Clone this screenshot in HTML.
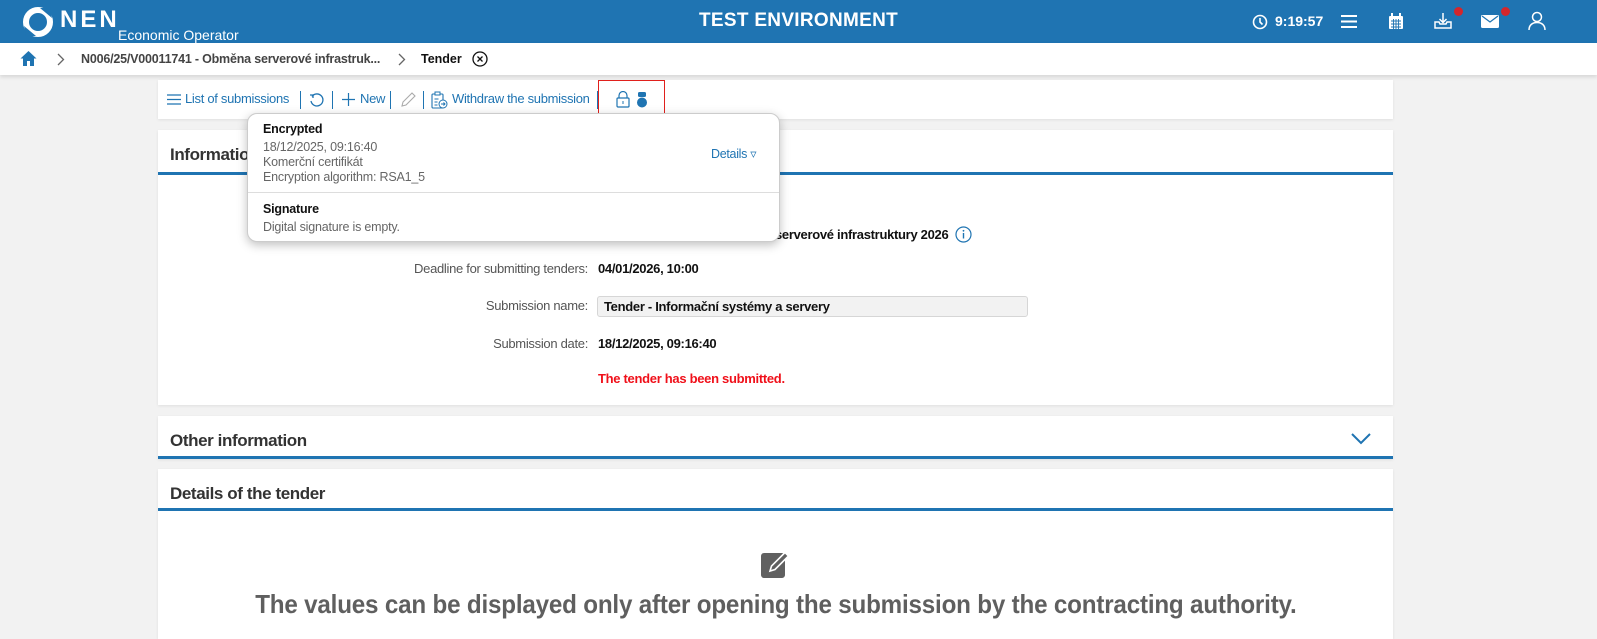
<!DOCTYPE html>
<html><head><meta charset="utf-8">
<style>
*{box-sizing:border-box;margin:0;padding:0}
body{width:1597px;height:632px;overflow:hidden;background:#f2f2f2;font-family:"Liberation Sans",Arial,sans-serif;position:relative;color:#222}
.abs{position:absolute}
.hdr{left:0;top:0;width:1597px;height:43px;background:#1f74b2;color:#fff}
.bc{left:0;top:43px;width:1597px;height:32px;background:#fff;box-shadow:0 2px 4px rgba(0,0,0,.12)}
.panel{background:#fff;left:158px;width:1235px;box-shadow:0 1px 3px rgba(0,0,0,.08)}
.lnk{color:#1f74b2;font-size:13px;letter-spacing:-.3px}
.sep{width:1px;height:18px;background:#1f74b2}
.h2{font-size:17px;font-weight:bold;color:#333;letter-spacing:-.4px}
.bar{height:3px;background:#1f74b2;left:0;width:1235px}
.lbl{font-size:13px;color:#555;letter-spacing:-.3px;text-align:right;width:300px}
.val{font-size:13px;color:#111;font-weight:bold;letter-spacing:-.3px}
.pop{left:247px;top:113px;width:533px;height:129px;background:#fff;border:1px solid #ccc;border-radius:10px;box-shadow:0 3px 10px rgba(0,0,0,.25)}
.pop .t{font-size:12.5px;color:#111;letter-spacing:-.2px}
.pop .g{font-size:12.5px;color:#666;letter-spacing:-.2px;line-height:15px}
</style></head><body>
<div class="abs hdr">
  <svg class="abs" style="left:22px;top:6px" width="32" height="32" viewBox="0 0 32 32"><circle cx="16" cy="16" r="12" fill="none" stroke="#fff" stroke-width="6"/><path d="M2 20 L14 30 L4 30Z M30 12 L18 2 L28 2Z" fill="#1f74b2"/></svg>
  <div class="abs" style="left:60px;top:6px;font-size:24px;font-weight:bold;letter-spacing:3px">NEN</div>
  <div class="abs" style="left:118px;top:27px;font-size:14px">Economic Operator</div>
  <div class="abs" style="left:0;width:1597px;top:10px;text-align:center;font-size:19px;font-weight:bold;letter-spacing:.3px">TEST ENVIRONMENT</div>
  <svg class="abs" style="left:1252px;top:14px" width="16" height="16" viewBox="0 0 16 16"><circle cx="8" cy="8" r="6.5" fill="none" stroke="#fff" stroke-width="1.6"/><path d="M8 4v4l2.5 2.5" stroke="#fff" stroke-width="1.6" fill="none"/></svg>
  <div class="abs" style="left:1275px;top:13px;font-size:14px;font-weight:bold">9:19:57</div>
  <svg class="abs" style="left:1341px;top:14px" width="16" height="15"><path d="M0 2h16M0 7.5h16M0 13h16" stroke="#fff" stroke-width="2"/></svg>
  <svg class="abs" style="left:1388px;top:13px" width="16" height="17" viewBox="0 0 16 17"><rect x="1" y="3" width="14" height="13" rx="1" fill="#fff"/><path d="M4 0v4M12 0v4" stroke="#fff" stroke-width="2"/><path d="M3 8h10M3 11h10M3 14h10M5.5 6v10M8 6v10M10.5 6v10" stroke="#1f74b2" stroke-width=".9"/></svg>
  <svg class="abs" style="left:1434px;top:12px" width="18" height="18" viewBox="0 0 18 18"><path d="M9 1v9M5.5 7L9 10.5 12.5 7" stroke="#fff" stroke-width="1.5" fill="none"/><path d="M1 10v6h16v-6h-4l-1 2H6l-1-2z" fill="none" stroke="#fff" stroke-width="1.5"/></svg>
  <div class="abs" style="left:1454px;top:7px;width:9px;height:9px;border-radius:50%;background:#d3262c"></div>
  <svg class="abs" style="left:1481px;top:15px" width="18" height="13"><rect width="18" height="13" rx="1.5" fill="#fff"/><path d="M1 1l8 6 8-6" stroke="#1f74b2" stroke-width="1.2" fill="none"/></svg>
  <div class="abs" style="left:1501px;top:7px;width:9px;height:9px;border-radius:50%;background:#d3262c"></div>
  <svg class="abs" style="left:1528px;top:11px" width="18" height="20" viewBox="0 0 18 20"><circle cx="9" cy="6" r="4.5" fill="none" stroke="#fff" stroke-width="1.5"/><path d="M1 19c0-5 3.5-7.5 8-7.5s8 2.5 8 7.5" fill="none" stroke="#fff" stroke-width="1.5"/></svg>
</div>
<div class="abs bc">
  <svg class="abs" style="left:20px;top:7px" width="17" height="17" viewBox="0 0 17 17"><path d="M8.5 1L0.5 8.5h2.5V16h4v-5h3v5h4V8.5h2.5z" fill="#1f74b2"/></svg>
  <svg class="abs" style="left:57px;top:10px" width="8" height="13"><path d="M1 1l5.5 5.5L1 12" fill="none" stroke="#666" stroke-width="1.3"/></svg>
  <div class="abs" style="left:81px;top:9px;font-size:12.5px;font-weight:bold;color:#444;letter-spacing:-.2px">N006/25/V00011741 - Obměna serverové infrastruk...</div>
  <svg class="abs" style="left:398px;top:10px" width="8" height="13"><path d="M1 1l5.5 5.5L1 12" fill="none" stroke="#666" stroke-width="1.3"/></svg>
  <div class="abs" style="left:421px;top:9px;font-size:12.5px;font-weight:bold;color:#111">Tender</div>
  <svg class="abs" style="left:472px;top:8px" width="16" height="16"><circle cx="8" cy="8" r="7" fill="none" stroke="#111" stroke-width="1.3"/><path d="M5.5 5.5l5 5M10.5 5.5l-5 5" stroke="#111" stroke-width="1.3"/></svg>
</div>

<div class="abs panel" style="top:80px;height:39px">
  <svg class="abs" style="left:9px;top:14px" width="14" height="11"><path d="M0 1h14M0 5.5h14M0 10h14" stroke="#1f74b2" stroke-width="1.2"/></svg>
  <div class="abs lnk" style="left:27px;top:11px">List of submissions</div>
  <div class="abs sep" style="left:142px;top:11px"></div>
  <svg class="abs" style="left:151px;top:12px" width="16" height="16" viewBox="0 0 16 16"><path d="M3 4.5A6 6 0 1 1 2 9" fill="none" stroke="#1f74b2" stroke-width="1.3"/><path d="M1 3h3v3" fill="none" stroke="#1f74b2" stroke-width="1.3"/></svg>
  <div class="abs sep" style="left:174px;top:11px"></div>
  <svg class="abs" style="left:184px;top:13px" width="13" height="13"><path d="M6.5 0v13M0 6.5h13" stroke="#1f74b2" stroke-width="1.2"/></svg>
  <div class="abs lnk" style="left:202px;top:11px">New</div>
  <div class="abs sep" style="left:232px;top:11px"></div>
  <svg class="abs" style="left:241px;top:11px" width="18" height="18"><path d="M3 15l1-4 9-9 3 3-9 9z" fill="none" stroke="#aaa" stroke-width="1.1"/></svg>
  <div class="abs sep" style="left:265px;top:11px"></div>
  <svg class="abs" style="left:273px;top:11px" width="17" height="18" viewBox="0 0 17 18"><rect x="1" y="3" width="11" height="14" rx="1" fill="none" stroke="#1f74b2" stroke-width="1.1"/><rect x="4" y="1" width="5" height="3" fill="#fff" stroke="#1f74b2"/><path d="M3.5 8h4M3.5 11h3M3.5 14h3" stroke="#1f74b2"/><circle cx="12" cy="13" r="4" fill="#fff" stroke="#1f74b2"/><path d="M10 13h4M12.5 11.5l1.5 1.5-1.5 1.5" stroke="#1f74b2" fill="none"/></svg>
  <div class="abs lnk" style="left:294px;top:11px">Withdraw the submission</div>
  <div class="abs sep" style="left:439px;top:11px"></div>
  <div class="abs" style="left:440px;top:0;width:67px;height:34px;border:1px solid #e0201c"></div>
  <svg class="abs" style="left:458px;top:11px" width="14" height="17" viewBox="0 0 14 17"><path d="M3 7V4.5a4 4 0 0 1 8 0V7" fill="none" stroke="#1f74b2" stroke-width="1.2"/><rect x="1" y="7" width="12" height="9" rx="1" fill="none" stroke="#1f74b2" stroke-width="1.2"/><path d="M7 10v3" stroke="#1f74b2"/></svg>
  <svg class="abs" style="left:478px;top:12px" width="12" height="16"><rect x="2" y="0" width="8" height="5" rx="1.5" fill="#1f74b2"/><circle cx="6" cy="10.5" r="5" fill="#1f74b2"/></svg>
</div>

<div class="abs panel" style="top:130px;height:275px">
  <div class="abs h2" style="left:12px;top:15px">Information</div>
  <div class="abs bar" style="top:42px"></div>
  <div class="abs val" style="left:617px;top:97px">serverové infrastruktury 2026</div>
  <svg class="abs" style="left:797px;top:96px" width="17" height="17"><circle cx="8.5" cy="8.5" r="7.5" fill="none" stroke="#1f74b2" stroke-width="1.2"/><path d="M8.5 7v5.5" stroke="#1f74b2" stroke-width="1.4"/><circle cx="8.5" cy="4.8" r=".9" fill="#1f74b2"/></svg>
  <div class="abs lbl" style="left:130px;top:131px">Deadline for submitting tenders:</div>
  <div class="abs val" style="left:440px;top:131px">04/01/2026, 10:00</div>
  <div class="abs lbl" style="left:130px;top:168px">Submission name:</div>
  <div class="abs" style="left:439px;top:166px;width:431px;height:21px;background:#f2f2f2;border:1px solid #d6d6d6;border-radius:3px"></div>
  <div class="abs val" style="left:446px;top:169px">Tender - Informační systémy a servery</div>
  <div class="abs lbl" style="left:130px;top:206px">Submission date:</div>
  <div class="abs val" style="left:440px;top:206px">18/12/2025, 09:16:40</div>
  <div class="abs val" style="left:440px;top:241px;color:#f0101a">The tender has been submitted.</div>
</div>

<div class="abs panel" style="top:416px;height:43px">
  <div class="abs h2" style="left:12px;top:15px">Other information</div>
  <svg class="abs" style="left:1193px;top:17px" width="20" height="12"><path d="M1 1l9 9 9-9" fill="none" stroke="#1f74b2" stroke-width="2"/></svg>
  <div class="abs bar" style="top:40px"></div>
</div>

<div class="abs panel" style="top:469px;height:170px">
  <div class="abs h2" style="left:12px;top:15px">Details of the tender</div>
  <div class="abs bar" style="top:39px"></div>
  <svg class="abs" style="left:602px;top:80px" width="30" height="30" viewBox="0 0 30 30"><rect x="1" y="4" width="24" height="25" rx="3" fill="#606060"/><path d="M10 22l1.5-5L25 3.5l3.5 3.5L15 20.5z" fill="#606060" stroke="#fff" stroke-width="1.6"/></svg>
  <div class="abs" style="left:0;width:1235px;top:120px;text-align:center;white-space:nowrap"><span style="display:inline-block;font-size:26px;font-weight:bold;color:#5f5f5f;transform:scaleX(.93);letter-spacing:-.2px">The values can be displayed only after opening the submission by the contracting authority.</span></div>
</div>

<div class="abs pop">
  <div class="abs t" style="left:15px;top:8px;font-weight:bold">Encrypted</div>
  <div class="abs g" style="left:15px;top:26px">18/12/2025, 09:16:40<br>Komerční certifikát<br>Encryption algorithm: RSA1_5</div>
  <div class="abs lnk" style="left:463px;top:32px;font-size:12.5px">Details ▿</div>
  <div class="abs" style="left:0;top:78px;width:531px;height:1px;background:#ddd"></div>
  <div class="abs t" style="left:15px;top:88px;font-weight:bold">Signature</div>
  <div class="abs g" style="left:15px;top:106px">Digital signature is empty.</div>
</div>
</body></html>
